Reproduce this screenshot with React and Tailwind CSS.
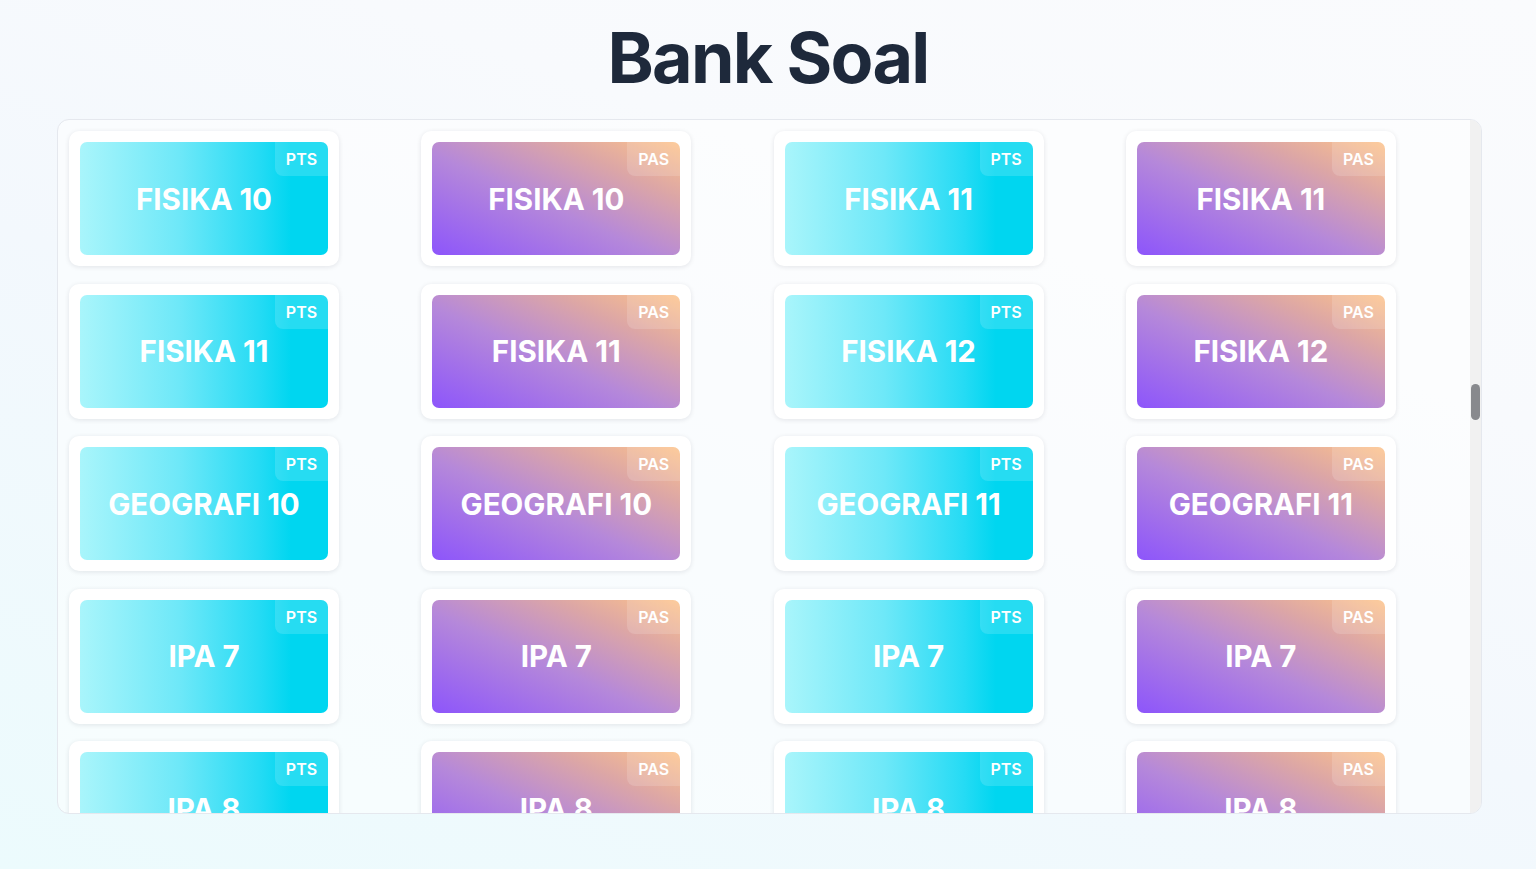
import React from "react";

const rows = [
  ["FISIKA 10", "FISIKA 10", "FISIKA 11", "FISIKA 11"],
  ["FISIKA 11", "FISIKA 11", "FISIKA 12", "FISIKA 12"],
  ["GEOGRAFI 10", "GEOGRAFI 10", "GEOGRAFI 11", "GEOGRAFI 11"],
  ["IPA 7", "IPA 7", "IPA 7", "IPA 7"],
  ["IPA 8", "IPA 8", "IPA 8", "IPA 8"],
];

function Card({ title, type }) {
  const pts = type === "PTS";
  return (
    <div className="w-[270px] h-[135px] shrink-0 rounded-[10px] bg-white p-[11px] shadow-[0_1px_5px_rgba(15,23,42,0.10)]">
      <div
        className={
          "relative h-full w-full rounded-[7px] overflow-hidden flex items-center justify-center " +
          (pts
            ? "bg-[linear-gradient(90deg,#a9f5fb_0%,#6ee8f8_40%,#26dbf4_72%,#00d6f0_85%,#00d6f0_100%)]"
            : "bg-[linear-gradient(to_top_right,#8d55fb_0%,#b588da_45%,#dca6a6_75%,#fdc38a_100%)]")
        }
      >
        <div className="absolute top-0 right-0 w-[53px] h-[34px] flex items-center justify-center rounded-bl-[8px] bg-white/15 text-white text-[16px] font-semibold leading-none">
          {type}
        </div>
        <span className="text-white text-[29.5px] font-bold leading-none pt-[2px]">
          {title}
        </span>
      </div>
    </div>
  );
}

export default function App() {
  return (
    <div
      className="w-[1536px] h-[869px] overflow-hidden bg-[linear-gradient(20deg,#ecfbfd_0%,#f3f8fd_45%,#f8fafd_70%,#fafbfd_100%)]"
      style={{ fontFamily: "Inter, 'Open Sans', sans-serif" }}
    >
      <div className="h-[119px] flex items-center justify-center pb-[3px]">
        <h1 className="text-[70px] font-bold leading-none tracking-tight text-[#1e293b]">
          Bank Soal
        </h1>
      </div>
      <div className="ml-[57px] w-[1425px] h-[695px] rounded-[12px] border border-[#e5e8ee] bg-white/50 flex overflow-hidden">
        <div className="flex-1 overflow-hidden pt-[11px] pl-[11px]">
          <div className="grid grid-cols-[repeat(4,270px)] gap-x-[82.3px] gap-y-[17.5px]">
            {rows.map((row, ri) =>
              row.map((t, ci) => (
                <Card key={ri + "-" + ci} title={t} type={ci % 2 === 0 ? "PTS" : "PAS"} />
              ))
            )}
          </div>
        </div>
        <div className="w-[11px] h-full bg-[#f1f1f1] flex flex-col items-center">
          <div className="mt-[264px] w-[9px] h-[36px] rounded-full bg-[#88898d]" />
        </div>
      </div>
    </div>
  );
}
